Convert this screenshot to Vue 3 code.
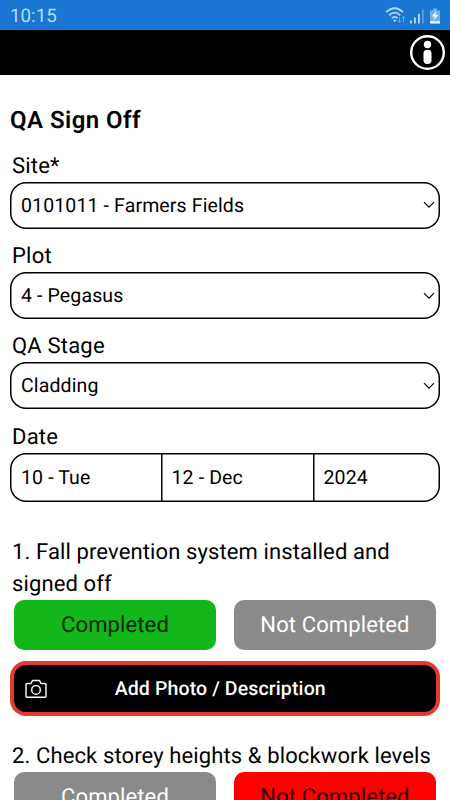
<template>
  <div class="phone">
    <div class="status-bar">
      <span class="clock">10:15</span>
      <svg class="status-icons" width="58" height="20" viewBox="0 0 58 20">
        <g fill="none" stroke="#b3dbf8" stroke-width="1.8">
          <path d="M1.2 6.2Q9.8 -1.8 18 6.2" />
          <path d="M4.1 9.3Q9.7 4 15.3 9.3" />
          <path d="M6.8 12.2Q9.7 9.6 12.6 12.2" />
        </g>
        <path d="M7.7 13.7h4.2L9.8 16.1z" fill="#b3dbf8" />
        <path d="M14.5 11v5.5m-1.7-1.8 1.7 1.8 1.7-1.8M18.5 16V10.5m-1.7 1.8 1.7-1.8 1.7 1.8" fill="none" stroke="#68a9e4" stroke-width="1" />
        <g fill="#b3dbf8">
          <rect x="25" y="14.5" width="1.8" height="3" />
          <rect x="29" y="11.5" width="1.8" height="6" />
          <rect x="33" y="8" width="1.8" height="9.5" />
        </g>
        <rect x="37" y="3.5" width="1.8" height="14" fill="#5c9fdf" />
        <path d="M48 2.5h4v2h3v13h-10v-13h3z" fill="#71afe8" />
        <path d="M45 15h10v2.5h-10z" fill="#d5edff" />
        <path d="M51.5 4.5l-4.8 6h3l-1.4 4.3 5.2-6h-3.2z" fill="#e5f4ff" />
      </svg>
    </div>

    <header class="app-bar">
      <svg class="info" width="36" height="36" viewBox="0 0 36 36" @click="showInfo = !showInfo">
        <circle cx="18.5" cy="17.5" r="16.3" fill="none" stroke="#fff" stroke-width="2.4" />
        <circle cx="18.5" cy="9.5" r="3.7" fill="#fff" />
        <rect x="14.5" y="14.7" width="8" height="14.4" rx="3.8" fill="#fff" />
      </svg>
    </header>

    <main class="form">
      <h1>QA Sign Off</h1>

      <div v-for="field in fields" :key="field.label" class="field">
        <label>{{ field.label }}</label>
        <div class="select outlined">
          <span>{{ field.value }}</span>
          <svg width="12" height="8" viewBox="0 0 12 8">
            <path d="M1 1.2l5 5 5-5" fill="none" stroke="#000" stroke-width="1.2" />
          </svg>
        </div>
      </div>

      <div class="field">
        <label>Date</label>
        <div class="date outlined">
          <span v-for="part in dateParts" :key="part">{{ part }}</span>
        </div>
      </div>

      <section v-for="item in checks" :key="item.text" class="check">
        <p>{{ item.text }}</p>
        <div class="choices">
          <button :class="{ done: item.completed === true }" @click="item.completed = true">Completed</button>
          <button :class="{ failed: item.completed === false }" @click="item.completed = false">Not Completed</button>
        </div>
        <button class="photo">
          <svg width="22" height="20" viewBox="0 0 22 20" fill="none" stroke="#fff" stroke-width="1.4" stroke-linejoin="round">
            <path d="M2 4.5h4l1.5-3h7l1.5 3h4q1 0 1 1V17.2q0 1-1 1H2q-1 0-1-1V5.5q0-1 1-1z" />
            <circle cx="11" cy="10.9" r="4.3" />
          </svg>
          <span>Add Photo / Description</span>
        </button>
      </section>
    </main>
  </div>
</template>

<script setup>
import { ref } from 'vue'

const showInfo = ref(false)

const fields = ref([
  { label: 'Site*', value: '0101011 - Farmers Fields' },
  { label: 'Plot', value: '4 - Pegasus' },
  { label: 'QA Stage', value: 'Cladding' }
])

const dateParts = ['10 - Tue', '12 - Dec', '2024']

const checks = ref([
  { text: '1. Fall prevention system installed and signed off', completed: true },
  { text: '2. Check storey heights & blockwork levels', completed: false }
])
</script>

<style>
body {
  margin: 0;
}
</style>

<style scoped>
.phone {
  height: 800px;
  overflow: hidden;
  background: #fff;
  color: #000;
  font-family: Roboto, sans-serif;
  text-rendering: geometricPrecision;
}

.status-bar {
  height: 30px;
  box-sizing: border-box;
  padding: 0 7px 0 10px;
  display: flex;
  align-items: center;
  justify-content: space-between;
  background: #1976d2;
}

.clock {
  font-size: 18.8px;
  line-height: 30px;
  padding-top: 1px;
  color: #b3dbf8;
}

.status-icons {
  margin-top: 2px;
}

.app-bar {
  height: 45px;
  box-sizing: border-box;
  padding-right: 5px;
  display: flex;
  align-items: center;
  justify-content: flex-end;
  background: #000;
}

.form {
  padding: 29px 10px 0;
}

h1 {
  margin: 0 0 13.8px;
  font-size: 24px;
  line-height: 32px;
  font-weight: 600;
  letter-spacing: 0.45px;
}

.field {
  margin-bottom: 11.3px;
}

label {
  display: block;
  height: 32px;
  padding-left: 2px;
  font-size: 22px;
  line-height: 34px;
  letter-spacing: 0.2px;
}

.outlined {
  border-radius: 16px;
  box-shadow: inset 0 0 0 1.5px #000;
  font-size: 19.5px;
  letter-spacing: 0.13px;
}

.select {
  height: 47px;
  box-sizing: border-box;
  padding: 0 5px 0 11px;
  display: flex;
  align-items: center;
  justify-content: space-between;
}

.date {
  height: 49.3px;
  display: grid;
  grid-template-columns: 151px 152px 1fr;
  line-height: 49.3px;
}

.date span {
  padding-left: 11px;
}

.date span + span {
  padding-left: 10.5px;
  box-shadow: inset 1.5px 0 0 #000;
}

.check {
  padding-top: 24px;
}

.check + .check {
  padding-top: 25px;
}

.check p {
  margin: 0 0 -1px 2px;
  font-size: 22px;
  line-height: 32px;
  letter-spacing: 0.12px;
}

.choices {
  display: flex;
  gap: 18px;
  padding: 0 4px;
}

button {
  border: none;
  font-family: inherit;
  text-rendering: inherit;
  cursor: pointer;
}

.choices button {
  flex: 1;
  height: 50px;
  padding: 0;
  border-radius: 10px;
  background: #8a8a8a;
  color: #fff;
  font-size: 22px;
  letter-spacing: 0.12px;
}

.choices .done {
  background: #14b71a;
  color: #062506;
}

.choices .failed {
  background: #f00;
  color: #300;
}

.photo {
  width: 100%;
  height: 55px;
  margin-top: 11px;
  padding: 0 11px 0 10.5px;
  display: flex;
  align-items: center;
  border: 4px solid #e23a30;
  border-radius: 16px;
  background: #000;
  color: #fff;
  font-size: 19.5px;
  font-weight: 500;
  letter-spacing: 0.12px;
}

.photo span {
  flex: 1;
  padding-right: 31px;
}
</style>
